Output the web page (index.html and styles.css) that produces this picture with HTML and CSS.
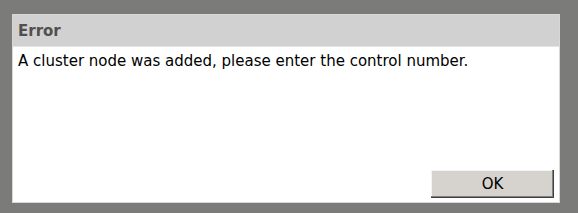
FILE: index.html
```html
<!DOCTYPE html>
<html>
<head>
<meta charset="utf-8">
<link rel="stylesheet" href="styles.css">
</head>
<body>
<div class="dialog">
  <div class="title">Error</div>
  <div class="message">A cluster node was added, please enter the control number.</div>
  <div class="footer">
    <button class="btn">OK</button>
  </div>
</div>
</body>
</html>
```
FILE: styles.css
```css
html, body {
  margin: 0;
  padding: 0;
  background: #7b7c79;
  width: 578px;
  height: 213px;
  overflow: hidden;
}
body {
  padding: 14px 0 0 12px;
  box-sizing: border-box;
  font-family: "DejaVu Sans", sans-serif;
}
.dialog {
  width: 548px;
  height: 189px;
  box-sizing: border-box;
  background: #ffffff;
  border: 1px solid #d8d8d8;
  display: flex;
  flex-direction: column;
}
.title {
  height: 29px;
  padding-top: 2px;
  background: #d1d1d1;
  color: #505050;
  font-weight: bold;
  font-size: 15px;
  line-height: 29px;
  padding-left: 5px;
  border-bottom: 1px solid #e4e4e4;
}
.message {
  padding: 4px 0 0 5px;
  font-size: 15px;
  color: #000;
  line-height: 20px;
}
.footer {
  margin-top: auto;
  display: flex;
  justify-content: flex-end;
  padding: 0 5px 4px 0;
}
.btn {
  width: 123px;
  height: 28px;
  background: #d6d3ce;
  border: none;
  box-shadow: inset -1px -1px 0 #404040, inset -2px -2px 0 #808080, inset 1px 1px 0 #f4f4f4;
  font-family: "DejaVu Sans", sans-serif;
  font-size: 15px;
  color: #000;
  padding: 0;
  margin: 0;
}
```
